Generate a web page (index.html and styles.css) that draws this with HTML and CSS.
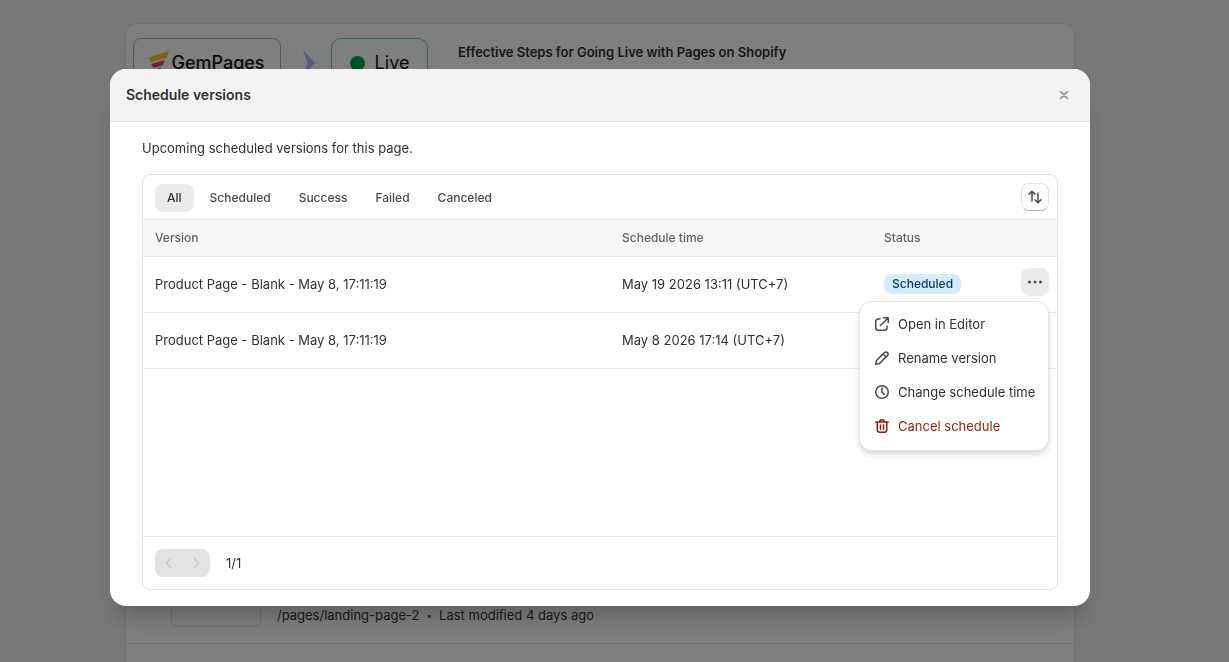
FILE: index.html
```html
<!DOCTYPE html>
<html lang="en">
<head>
  <meta charset="UTF-8">
  <meta name="viewport" content="width=device-width, initial-scale=1.0">
  <title>Schedule versions</title>
  <link rel="stylesheet" href="styles.css">
</head>
<body>
  <div class="page">
    <section class="card banner">
      <div class="banner-media">
        <div class="brand-box">
          <svg class="brand-mark" viewBox="0 0 20 24" aria-hidden="true">
            <path d="M0 6.5 20 0l-2.5 7L1.5 11.5Z" fill="#ffbd2e"/>
            <path d="M2 13 16 9l-2.500 5.500L4.500 17Z" fill="#f23d6d"/>
            <path d="M6 18.500 12 16.500 9 24Z" fill="#4a5cf0"/>
          </svg>
          <span>GemPages</span>
        </div>
        <svg class="banner-arrow" viewBox="0 0 12 26" aria-hidden="true">
          <path d="M0 0 12 13 0 26 4.500 13Z" fill="#adb8f5"/>
        </svg>
        <div class="live-box">
          <span class="live-dot"></span>
          <span>Live</span>
        </div>
      </div>
      <h3 class="banner-title">Effective Steps for Going Live with Pages on Shopify</h3>
    </section>

    <section class="card page-list">
      <div class="page-row">
        <div class="page-thumb"></div>
        <p class="page-meta"><span>/pages/landing-page-2</span><span class="dot">•</span><span>Last modified 4 days ago</span></p>
      </div>
      <div class="page-row-next"></div>
    </section>
  </div>

  <div class="backdrop">
    <div class="modal" role="dialog" aria-modal="true" aria-labelledby="modal-title">
      <header class="modal-header">
        <h2 id="modal-title">Schedule versions</h2>
        <button class="close-btn" type="button" aria-label="Close">
          <svg class="icon" viewBox="0 0 20 20"><path d="m6.500 6.500 7 7m0-7-7 7"/></svg>
        </button>
      </header>

      <div class="modal-body">
        <p>Upcoming scheduled versions for this page.</p>

        <div class="versions">
          <div class="toolbar">
            <div class="tabs" role="tablist">
              <button class="tab active" type="button" role="tab" aria-selected="true">All</button>
              <button class="tab" type="button" role="tab">Scheduled</button>
              <button class="tab" type="button" role="tab">Success</button>
              <button class="tab" type="button" role="tab">Failed</button>
              <button class="tab" type="button" role="tab">Canceled</button>
            </div>
            <button class="sort-btn" type="button" aria-label="Sort">
              <svg class="icon" viewBox="0 0 20 20"><path d="M7 14V4.500M4 7.250l3-3 3 3M13 6v9.500m-3-2.750 3 3 3-3"/></svg>
            </button>
          </div>

          <div class="table-wrap">
            <table>
              <colgroup>
                <col>
                <col class="col-time">
                <col class="col-status">
                <col class="col-actions">
              </colgroup>
              <thead>
                <tr>
                  <th>Version</th>
                  <th>Schedule time</th>
                  <th>Status</th>
                  <th></th>
                </tr>
              </thead>
              <tbody>
                <tr>
                  <td>Product Page - Blank - May 8, 17:11:19</td>
                  <td>May 19 2026 13:11 (UTC+7)</td>
                  <td><span class="badge">Scheduled</span></td>
                  <td class="actions">
                    <button class="more-btn" type="button" aria-label="More actions" aria-expanded="true">
                      <svg class="icon" viewBox="0 0 20 20"><g class="solid"><circle cx="4.500" cy="10" r="1.500"/><circle cx="10" cy="10" r="1.500"/><circle cx="15.500" cy="10" r="1.500"/></g></svg>
                    </button>
                    <div class="menu" role="menu">
                      <button class="menu-item" type="button" role="menuitem">
                        <svg class="icon" viewBox="0 0 20 20"><path d="M8 5H6.250A2.500 2.500 0 0 0 3.750 7.500v6.250a2.500 2.500 0 0 0 2.500 2.500h6.250a2.500 2.500 0 0 0 2.500-2.500V12M11.500 3.750h4.750V8.500M16 4l-7.500 7.500"/></svg>
                        Open in Editor
                      </button>
                      <button class="menu-item" type="button" role="menuitem">
                        <svg class="icon" viewBox="0 0 20 20"><path d="M3.750 16.250 4.500 12.500 12.400 4.600a2.100 2.100 0 0 1 3 3L7.500 15.500ZM11 6l3 3"/></svg>
                        Rename version
                      </button>
                      <button class="menu-item" type="button" role="menuitem">
                        <svg class="icon" viewBox="0 0 20 20"><circle cx="10" cy="10" r="6.250"/><path d="M10 6v4.250l2.250 2.250"/></svg>
                        Change schedule time
                      </button>
                      <button class="menu-item danger" type="button" role="menuitem">
                        <svg class="icon" viewBox="0 0 20 20"><path d="M3.750 6h12.500M7.750 6a2.250 2.250 0 0 1 4.500 0M5.250 6v7.750a2.500 2.500 0 0 0 2.500 2.500h4.500a2.500 2.500 0 0 0 2.500-2.500V6M8.500 9v4.250M11.500 9v4.250"/></svg>
                        Cancel schedule
                      </button>
                    </div>
                  </td>
                </tr>
                <tr>
                  <td>Product Page - Blank - May 8, 17:11:19</td>
                  <td>May 8 2026 17:14 (UTC+7)</td>
                  <td></td>
                  <td></td>
                </tr>
              </tbody>
            </table>
          </div>

          <footer class="pagination">
            <div class="pager">
              <button type="button" aria-label="Previous" disabled>
                <svg class="icon" viewBox="0 0 20 20"><path d="M11.500 5.750 7.250 10l4.250 4.250"/></svg>
              </button>
              <button type="button" aria-label="Next" disabled>
                <svg class="icon" viewBox="0 0 20 20"><path d="M8.500 5.750 12.750 10 8.500 14.250"/></svg>
              </button>
            </div>
            <span>1/1</span>
          </footer>
        </div>
      </div>
    </div>
  </div>
</body>
</html>
```

FILE: styles.css
```css
* {
  box-sizing: border-box;
}

body {
  margin: 0;
  font-family: Inter, "Liberation Sans", sans-serif;
  font-size: 13px;
  font-weight: 420;
  line-height: 20px;
  color: #303030;
  background: #f1f1f1;
}

h2,
h3,
p {
  margin: 0;
}

button {
  margin: 0;
  padding: 0;
  border: 0;
  background: none;
  font: inherit;
  color: inherit;
  cursor: pointer;
}

.icon {
  display: block;
  flex: none;
  width: 20px;
  height: 20px;
  fill: none;
  stroke: #4a4a4a;
  stroke-width: 1.5;
  stroke-linecap: round;
  stroke-linejoin: round;
}

.icon .solid {
  fill: #4a4a4a;
  stroke: none;
}

/* Page behind the modal */
.page {
  display: flex;
  flex-direction: column;
  gap: 16px;
  height: 100vh;
  padding: 23px 29px 0 0;
  overflow: hidden;
}

.card {
  width: calc(100% - 32px);
  max-width: 950px;
  margin: 0 auto;
  border: 1px solid #dedede;
  background: #fff;
}

.banner {
  display: flex;
  gap: 20px;
  min-height: 160px;
  border-radius: 12px;
}

.banner-media {
  display: flex;
  align-items: flex-start;
  width: 312px;
  padding: 14px 7px;
  border-radius: 12px 0 0 0;
  background: linear-gradient(180deg, #fff, #f6f7ff);
  color: #111;
}

.brand-box,
.live-box {
  display: flex;
  align-items: center;
  height: 50px;
  border: 1px solid #a5aff0;
  border-radius: 8px;
  font-size: 18px;
  background: #fff;
}

.brand-box {
  justify-content: center;
  gap: 2px;
  width: 148px;
  font-weight: 550;
}

.brand-mark {
  width: 20px;
  height: 24px;
}

.banner-arrow {
  width: 12px;
  height: 26px;
  margin: 12px 16px 0 22px;
}

.live-box {
  justify-content: center;
  gap: 10px;
  width: 97px;
  border-color: #6fd3a0;
  border-radius: 10px;
}

.live-dot {
  width: 15px;
  height: 15px;
  border-radius: 50%;
  background: #00a651;
}

.banner-title {
  padding-top: 18px;
  font-size: 13px;
  font-weight: 630;
}

.page-list {
  display: flex;
  flex: 1;
  flex-direction: column;
  justify-content: flex-end;
  border-bottom: 0;
  border-radius: 12px 12px 0 0;
}

.page-row {
  display: flex;
  align-items: flex-end;
  gap: 16px;
  padding: 16px 16px 16px 45px;
  border-bottom: 1px solid #dedede;
}

.page-row-next {
  height: 18px;
}

.page-thumb {
  width: 90px;
  height: 90px;
  border: 1px solid #dedede;
  border-radius: 4px;
}

.page-meta {
  display: flex;
  gap: 7px;
  padding-bottom: 2px;
}

.page-meta .dot {
  font-size: 10px;
  color: #616161;
}

/* Modal */
.backdrop {
  position: fixed;
  inset: 0;
  display: flex;
  align-items: flex-start;
  justify-content: center;
  padding: 69px 29px 0 0;
  background: rgba(0, 0, 0, 0.5);
}

.modal {
  width: calc(100% - 32px);
  max-width: 980px;
  border-radius: 16px;
  background: #fff;
  box-shadow: 0 20px 20px -8px rgba(26, 26, 26, 0.28);
}

.modal-header {
  display: flex;
  align-items: center;
  justify-content: space-between;
  padding: 16px;
  border-bottom: 1px solid #e3e3e3;
  border-radius: 16px 16px 0 0;
  background: #f3f3f3;
}

.modal-header h2 {
  font-size: 14px;
  font-weight: 630;
}

.close-btn .icon {
  stroke: #8a8a8a;
}

.modal-body {
  display: flex;
  flex-direction: column;
  gap: 16px;
  padding: 16px 32px;
}

.versions {
  border: 1px solid #e3e3e3;
  border-radius: 8px;
}

.toolbar {
  display: flex;
  align-items: flex-start;
  justify-content: space-between;
  padding: 8px 8px 7px 12px;
  border-bottom: 1px solid #e3e3e3;
}

.tabs {
  display: flex;
  gap: 4px;
  padding-top: 1px;
}

.tab {
  height: 28px;
  padding: 0 12px;
  border-radius: 8px;
  font-size: 12px;
  font-weight: 550;
  color: #4a4a4a;
}

.tab.active {
  background: #ebebeb;
  color: #303030;
}

.sort-btn,
.more-btn {
  width: 28px;
  height: 28px;
  padding: 4px;
  border-radius: 8px;
}

.sort-btn {
  border: 1px solid #e3e3e3;
  border-bottom-color: #b5b5b5;
  padding: 3px;
}

.more-btn {
  background: #ebebeb;
}

.table-wrap {
  min-height: 316px;
}

table {
  width: 100%;
  border-collapse: separate;
  border-spacing: 0;
  table-layout: fixed;
}

.col-time {
  width: 262px;
}

.col-status {
  width: 136px;
}

.col-actions {
  width: 49px;
}

th,
td {
  padding: 0 12px;
  text-align: left;
  border-bottom: 1px solid #e3e3e3;
}

th {
  height: 37px;
  font-size: 12px;
  font-weight: 550;
  color: #616161;
  background: #f7f7f7;
}

td {
  height: 56px;
  padding-bottom: 2px;
  border-bottom-color: #ebebeb;
}

.badge {
  display: inline-block;
  padding: 0 8px;
  border-radius: 8px;
  font-size: 12px;
  font-weight: 450;
  background: #d5ebff;
  color: #003a5a;
}

.actions {
  position: relative;
  padding: 11px 8px 0 13px;
  vertical-align: top;
}

.more-btn {
  display: block;
}

.menu {
  position: absolute;
  top: 45px;
  right: 9px;
  z-index: 1;
  min-width: 188px;
  padding: 5px 4px 7px;
  border-radius: 12px;
  background: #fff;
  box-shadow: 0 0 0 1px #e3e3e3, 0 4px 6px rgba(26, 26, 26, 0.2);
}

.menu-item {
  display: flex;
  align-items: center;
  gap: 6px;
  width: 100%;
  height: 34px;
  padding: 0 8px;
  white-space: nowrap;
}

.menu-item.danger {
  color: #8e1f0b;
}

.menu-item.danger .icon {
  stroke: #8e1f0b;
}

.pagination {
  display: flex;
  align-items: center;
  gap: 16px;
  padding: 12px;
  border-top: 1px solid #e3e3e3;
}

.pager {
  display: flex;
  border-radius: 8px;
  background: #e3e3e3;
}

.pager button {
  height: 28px;
  padding: 4px 4px 4px 3px;
}

.pager button:first-child {
  padding-left: 4px;
}

.pager .icon {
  stroke: #cccccc;
}
```
